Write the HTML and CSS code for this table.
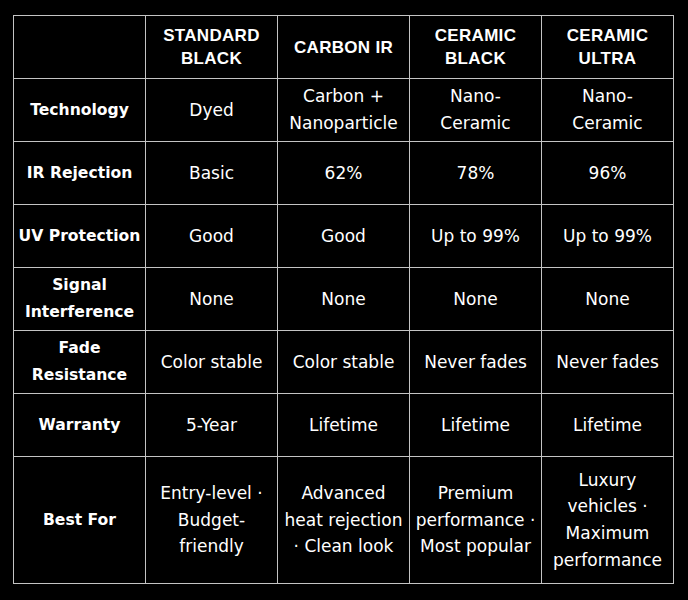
FILE: index.html
```html
<!DOCTYPE html>
<html lang="en">
<head>
    <meta charset="UTF-8">
    <title>Window Film Comparison</title>
    <link rel="stylesheet" href="styles.css">
</head>
<body>
    <div class="wrap">
        <table class="compare">
            <thead>
                <tr>
                    <th></th>
                    <th>Standard Black</th>
                    <th>Carbon IR</th>
                    <th>Ceramic Black</th>
                    <th>Ceramic Ultra</th>
                </tr>
            </thead>
            <tbody>
                <tr>
                    <td class="label">Technology</td>
                    <td>Dyed</td>
                    <td>Carbon + Nanoparticle</td>
                    <td>Nano-<br>Ceramic</td>
                    <td>Nano-<br>Ceramic</td>
                </tr>
                <tr>
                    <td class="label">IR Rejection</td>
                    <td>Basic</td>
                    <td>62%</td>
                    <td>78%</td>
                    <td>96%</td>
                </tr>
                <tr>
                    <td class="label">UV Protection</td>
                    <td>Good</td>
                    <td>Good</td>
                    <td>Up to 99%</td>
                    <td>Up to 99%</td>
                </tr>
                <tr>
                    <td class="label">Signal Interference</td>
                    <td>None</td>
                    <td>None</td>
                    <td>None</td>
                    <td>None</td>
                </tr>
                <tr>
                    <td class="label">Fade Resistance</td>
                    <td>Color stable</td>
                    <td>Color stable</td>
                    <td>Never fades</td>
                    <td>Never fades</td>
                </tr>
                <tr>
                    <td class="label">Warranty</td>
                    <td>5-Year</td>
                    <td>Lifetime</td>
                    <td>Lifetime</td>
                    <td>Lifetime</td>
                </tr>
                <tr class="tall">
                    <td class="label">Best For</td>
                    <td>Entry-level · Budget-friendly</td>
                    <td>Advanced heat rejection · Clean look</td>
                    <td>Premium performance · Most popular</td>
                    <td>Luxury vehicles · Maximum performance</td>
                </tr>
            </tbody>
        </table>
    </div>
</body>
</html>
```

FILE: styles.css
```css
body {
    margin: 0;
    background: #000;
    color: #fff;
    font-family: "DejaVu Sans", sans-serif;
}

.wrap {
    padding: 15px 14px 0 13px;
}

.compare {
    border-collapse: collapse;
    table-layout: fixed;
    width: 661px;
}

.compare th,
.compare td {
    border: 1px solid #c4c4c4;
    text-align: center;
    vertical-align: middle;
    padding: 4px 4px;
}

.compare tr {
    height: 63px;
}

.compare tr.tall {
    height: 127px;
}

.compare th {
    font-family: "Liberation Sans", Arial, sans-serif;
    font-weight: bold;
    font-size: 17px;
    line-height: 23px;
    letter-spacing: 0.3px;
    text-transform: uppercase;
}

.compare td {
    font-size: 17px;
    line-height: 26.7px;
}

.compare td.label {
    font-weight: bold;
    font-size: 15.6px;
}
```
